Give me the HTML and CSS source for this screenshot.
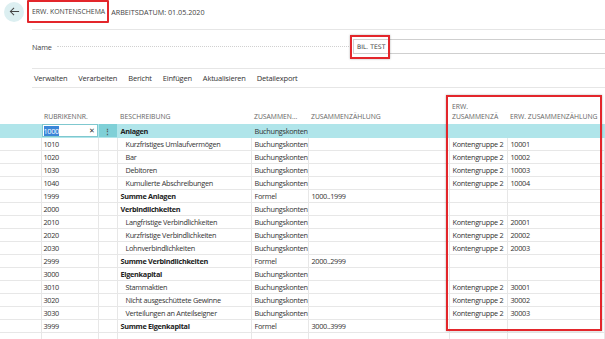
FILE: index.html
```html
<!DOCTYPE html>
<html lang="de">
<head>
    <meta charset="UTF-8">
    <meta name="viewport" content="width=device-width, initial-scale=1.0">
    <title>Erw. Kontenschema</title>
    <link rel="stylesheet" href="styles.css">
</head>
<body>
    <div class="page">
        <div class="topbar">
            <button class="back-btn">
                <svg width="11" height="11" viewBox="0 0 12 12"><path d="M11 6H1.5M5.5 2L1.5 6l4 4" fill="none" stroke="#444" stroke-width="1.1"/></svg>
            </button>
            <span class="title marked">ERW. KONTENSCHEMA</span>
            <span class="workdate">ARBEITSDATUM: 01.05.2020</span>
        </div>

        <div class="card">
            <div class="name-row">
                <span class="field-label">Name</span>
                <span class="dots"></span>
                <div class="field-input"><span class="marked-field">BIL. TEST</span></div>
            </div>
            <div class="actions">
                <span>Verwalten</span>
                <span>Verarbeiten</span>
                <span>Bericht</span>
                <span>Einfügen</span>
                <span>Aktualisieren</span>
                <span>Detailexport</span>
            </div>
        </div>

        <div class="grid-wrap">
            <table class="grid">
                <colgroup>
                    <col style="width:41px">
                    <col style="width:57px">
                    <col style="width:19px">
                    <col style="width:134px">
                    <col style="width:57px">
                    <col style="width:141px">
                    <col style="width:58px">
                    <col>
                </colgroup>
                <thead>
                    <tr>
                        <th class="gutter"></th>
                        <th>RUBRIKENNR.</th>
                        <th></th>
                        <th>BESCHREIBUNG</th>
                        <th>ZUSAMMEN...</th>
                        <th>ZUSAMMENZÄHLUNG</th>
                        <th>ERW.<br>ZUSAMMENZÄ</th>
                        <th>ERW. ZUSAMMENZÄHLUNG</th>
                    </tr>
                </thead>
                <tbody id="rows"></tbody>
            </table>
            <div class="mark-box"></div>
        </div>
    </div>

    <script>
        const rows = [
            ['1000', 'Anlagen', 'b', 'Buchungskonten', '', '', ''],
            ['1010', 'Kurzfristiges Umlaufvermögen', 'i', 'Buchungskonten', '', 'Kontengruppe 2', '10001'],
            ['1020', 'Bar', 'i', 'Buchungskonten', '', 'Kontengruppe 2', '10002'],
            ['1030', 'Debitoren', 'i', 'Buchungskonten', '', 'Kontengruppe 2', '10003'],
            ['1040', 'Kumulierte Abschreibungen', 'i', 'Buchungskonten', '', 'Kontengruppe 2', '10004'],
            ['1999', 'Summe Anlagen', 'b', 'Formel', '1000..1999', '', ''],
            ['2000', 'Verbindlichkeiten', 'b', 'Buchungskonten', '', '', ''],
            ['2010', 'Langfristige Verbindlichkeiten', 'i', 'Buchungskonten', '', 'Kontengruppe 2', '20001'],
            ['2020', 'Kurzfristige Verbindlichkeiten', 'i', 'Buchungskonten', '', 'Kontengruppe 2', '20002'],
            ['2030', 'Lohnverbindlichkeiten', 'i', 'Buchungskonten', '', 'Kontengruppe 2', '20003'],
            ['2999', 'Summe Verbindlichkeiten', 'b', 'Formel', '2000..2999', '', ''],
            ['3000', 'Eigenkapital', 'b', 'Buchungskonten', '', '', ''],
            ['3010', 'Stammaktien', 'i', 'Buchungskonten', '', 'Kontengruppe 2', '30001'],
            ['3020', 'Nicht ausgeschüttete Gewinne', 'i', 'Buchungskonten', '', 'Kontengruppe 2', '30002'],
            ['3030', 'Verteilungen an Anteilseigner', 'i', 'Buchungskonten', '', 'Kontengruppe 2', '30003'],
            ['3999', 'Summe Eigenkapital', 'b', 'Formel', '3000..3999', '', ''],
            ['', '', '', '', '', '', '']
        ];

        const body = document.getElementById('rows');
        rows.forEach((r, i) => {
            const tr = document.createElement('tr');
            if (i === 0) tr.className = 'selected';
            const numCell = i === 0
                ? '<td class="num"><div class="edit"><span class="sel">1000</span><span class="clear">&#x2715;</span></div></td><td class="menu">&#x22EE;</td>'
                : `<td class="num">${r[0]}</td><td></td>`;
            tr.innerHTML = `<td class="gutter"></td>${numCell}` +
                `<td class="desc ${r[2] === 'b' ? 'bold' : (r[2] === 'i' ? 'indent' : '')}">${r[1]}</td>` +
                `<td>${r[3]}</td><td>${r[4]}</td><td>${r[5]}</td><td>${r[6]}</td>`;
            body.appendChild(tr);
        });
    </script>
</body>
</html>
```

FILE: styles.css
```css
body {
    margin: 0;
    padding: 0;
    background: #fff;
    font-family: "Open Sans", "Noto Sans", sans-serif;
    color: #333;
    overflow: hidden;
}

.page {
    width: 605px;
    height: 339px;
    position: relative;
}

/* Header */
.topbar {
    display: flex;
    align-items: center;
    height: 23px;
    padding-left: 4px;
}

.back-btn {
    width: 20px;
    height: 20px;
    border: none;
    border-radius: 50%;
    background-color: #dceff1;
    display: flex;
    align-items: center;
    justify-content: center;
    padding: 0;
    margin-right: 3px;
}

.title {
    font-size: 6.9px;
    color: #444;
    padding: 5px 2px 5px 3px;
}

.marked {
    border: 2px solid #e3262b;
    border-radius: 1px;
}

.workdate {
    font-size: 7.2px;
    color: #444;
    margin-left: 2px;
}

/* Card with name and actions */
.card {
    margin-left: 32px;
    margin-top: 6px;
    border-top: 1px solid #e6e6e6;
}

.name-row {
    display: flex;
    align-items: center;
    height: 33px;
    padding-bottom: 5px;
    border-bottom: 1px solid #e6e6e6;
}

.field-label {
    font-size: 7.3px;
    letter-spacing: -0.2px;
    color: #444;
}

.dots {
    flex: 1;
    border-bottom: 1px dotted #d0d0d0;
    margin: 0 4px 0 5px;
}

.field-input {
    width: 252px;
    height: 15px;
    border: 1px solid #cfcfcf;
    border-right: none;
    box-sizing: border-box;
    display: flex;
    align-items: center;
}

.marked-field {
    font-size: 6.1px;
    font-family: "DejaVu Sans", sans-serif;
    color: #444;
    border: 2px solid #e3262b;
    margin-left: -4px;
    height: 24px;
    line-height: 20px;
    box-sizing: border-box;
    padding: 0 3px 0 5px;
    box-shadow: 0 0 2px rgba(0, 0, 0, 0.3);
}

.actions {
    display: flex;
    gap: 11px;
    height: 18px;
    align-items: center;
    border-bottom: 1px solid #e6e6e6;
    padding-left: 2px;
}

.actions span {
    font-size: 7.5px;
    letter-spacing: -0.2px;
    color: #333;
}

/* Grid */
.grid-wrap {
    margin-top: 7px;
    position: relative;
}

.grid {
    border-collapse: collapse;
    table-layout: fixed;
    width: 605px;
    font-size: 7.3px;
    letter-spacing: -0.3px;
}

.grid th {
    height: 27px;
    text-align: left;
    vertical-align: bottom;
    font-weight: normal;
    color: #666;
    font-size: 6.8px;
    letter-spacing: 0;
    padding: 0 3px 2px 3px;
    line-height: 10px;
    white-space: nowrap;
    overflow: hidden;
}

.grid td {
    height: 12px;
    padding: 0 3px;
    border: 1px solid #e7e7e7;
    white-space: nowrap;
    overflow: hidden;
    line-height: 12px;
    color: #333;
}

.grid td.gutter {
    border-left: none;
}

.grid tbody tr:first-child td {
    border-top: none;
}

.grid tr.selected td {
    background-color: #b0e5ea;
    border-color: #b0e5ea;
}

.grid td.num {
    padding-left: 2px;
}

.grid tr.selected td.num {
    padding: 0;
}

.edit {
    background: #fff;
    border: 1px solid #7fc8cf;
    height: 11px;
    display: flex;
    align-items: center;
    justify-content: space-between;
    padding: 0 2px 0 1px;
}

.sel {
    background-color: #3a86d8;
    color: #fff;
    line-height: 10px;
}

.clear {
    font-size: 7px;
    color: #333;
}

.grid tr.selected td.menu {
    background-color: #7fd0d7;
    text-align: center;
    color: #555;
    font-weight: bold;
}

.desc.bold {
    font-weight: bold;
    color: #222;
}

.desc.indent {
    padding-left: 8px;
}

.mark-box {
    position: absolute;
    left: 446px;
    top: 0;
    width: 152px;
    height: 232px;
    border: 2px solid #e3262b;
    box-shadow: 0 0 2px rgba(0, 0, 0, 0.3);
    pointer-events: none;
}
```
